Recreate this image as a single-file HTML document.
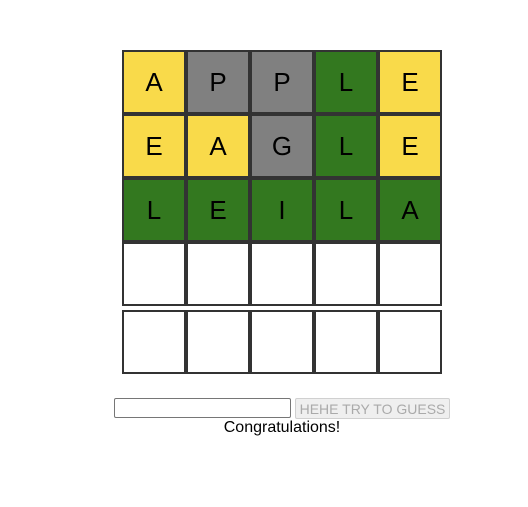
<!DOCTYPE html><html><head><style>
body{margin:0;width:528px;height:507px;background:#fff;position:relative;font-family:"Liberation Sans",Arial,sans-serif}
.c{position:absolute;width:60px;height:60px;border:2px solid #333;display:flex;align-items:center;justify-content:center;font-size:26px;color:#000}
.y{background:#f9da4a}.g{background:#808080}.gr{background:#33781f}
input{position:absolute;left:114px;top:398px;width:175px;height:18px;border:1px solid #767676;border-radius:2px;padding:0;margin:0}
button{position:absolute;left:295px;top:398px;width:155px;height:21px;background:#efefef;border:1px solid #d0d0d0;border-radius:2px;color:#aaa;font:14px "Liberation Sans",Arial,sans-serif;padding:0}
.t{position:absolute;left:0;width:564px;text-align:center;top:419px;font-size:16px}
</style></head><body>
<div class="c y" style="left:122px;top:50px">A</div><div class="c g" style="left:186px;top:50px">P</div><div class="c g" style="left:250px;top:50px">P</div><div class="c gr" style="left:314px;top:50px">L</div><div class="c y" style="left:378px;top:50px">E</div>
<div class="c y" style="left:122px;top:114px">E</div><div class="c y" style="left:186px;top:114px">A</div><div class="c g" style="left:250px;top:114px">G</div><div class="c gr" style="left:314px;top:114px">L</div><div class="c y" style="left:378px;top:114px">E</div>
<div class="c gr" style="left:122px;top:178px">L</div><div class="c gr" style="left:186px;top:178px">E</div><div class="c gr" style="left:250px;top:178px">I</div><div class="c gr" style="left:314px;top:178px">L</div><div class="c gr" style="left:378px;top:178px">A</div>
<div class="c" style="left:122px;top:242px"></div><div class="c" style="left:186px;top:242px"></div><div class="c" style="left:250px;top:242px"></div><div class="c" style="left:314px;top:242px"></div><div class="c" style="left:378px;top:242px"></div>
<div class="c" style="left:122px;top:310px"></div><div class="c" style="left:186px;top:310px"></div><div class="c" style="left:250px;top:310px"></div><div class="c" style="left:314px;top:310px"></div><div class="c" style="left:378px;top:310px"></div>
<input type="text"><button>HEHE TRY TO GUESS</button>
<div class="t">Congratulations!</div>
</body></html>
